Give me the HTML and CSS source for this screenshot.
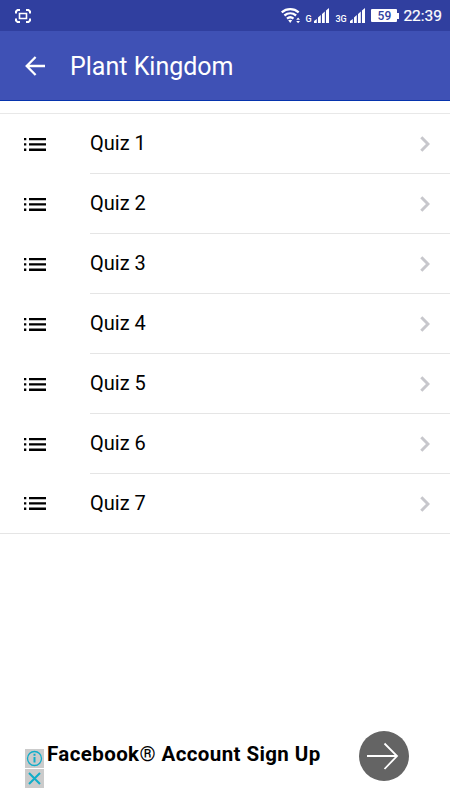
FILE: index.html
```
<!DOCTYPE html>
<html lang="en">
<head>
    <meta charset="utf-8">
    <title>Plant Kingdom</title>
    <link rel="stylesheet" href="styles.css">
</head>
<body>
    <svg class="sprite" aria-hidden="true">
        <symbol id="icon-list" viewBox="0 0 22 13">
            <path d="M0 0h2.3v2.3H0zM5 0h17v2.3H5zM0 5.3h2.3v2.3H0zM5 5.3h17v2.3H5zM0 10.6h2.3v2.3H0zM5 10.6h17v2.3H5z"/>
        </symbol>
        <symbol id="icon-chevron" viewBox="0 0 10 16">
            <path d="M1.3 1.3L8 8l-6.7 6.7" fill="none" stroke="#c7c7cc" stroke-width="3"/>
        </symbol>
        <symbol id="icon-signal" viewBox="0 0 15 15">
            <path d="M0 15v-2l2.800-2v4zM4 15V9.500l2.800-2.500v8zM8 15V6l2.800-2.500V15zM12 15V2.500L15 0v15z" fill="#fff"/>
        </symbol>
    </svg>
    <div class="status-bar">
        <svg class="capture" width="16" height="14" viewBox="0 0 16 14" fill="none" stroke="#fff" stroke-width="2">
            <path d="M1 4.5V2.5L2.5 1H5M11 1h2.5L15 2.5v2M15 9.5v2L13.5 13H11M5 13H2.5L1 11.5v-2"/>
            <path d="M4.5 4.5h7v5h-7z" stroke-width="1.6"/>
        </svg>
        <svg class="wifi" width="20" height="16" viewBox="0 0 20 16">
            <g fill="none" stroke="#fff" stroke-width="2.3">
                <path d="M.7 4.3c5-4.2 12.1-4.2 17 0M3.4 7.5c3.5-2.9 8.2-2.9 11.7 0M6 10.6c2-1.6 4.5-1.6 6.5 0"/>
            </g>
            <path d="M7.2 12.3q2-1.3 4 0l-2 2.7zM15.2 11.7l1.9-2.2 1.9 2.200zM15.2 13h3.800l-1.900 2.200z" fill="#fff"/>
        </svg>
        <span class="network">G</span>
        <svg class="signal" width="15" height="15"><use href="#icon-signal"/></svg>
        <span class="network network-3g">3G</span>
        <svg class="signal" width="15" height="15"><use href="#icon-signal"/></svg>
        <span class="battery">59</span>
        <span class="clock">22:39</span>
    </div>
    <div class="toolbar">
        <svg class="back" width="20" height="20" viewBox="0 0 20 20" fill="none" stroke="#fff" stroke-width="2.3">
            <path d="M20 10H2M10.6 1L1.7 10l8.9 9"/>
        </svg>
        <h1>Plant Kingdom</h1>
    </div>
    <ul class="quiz-list">
        <li><svg class="list-icon"><use href="#icon-list"/></svg><div class="inner"><span>Quiz 1</span><svg class="chevron"><use href="#icon-chevron"/></svg></div></li>
        <li><svg class="list-icon"><use href="#icon-list"/></svg><div class="inner"><span>Quiz 2</span><svg class="chevron"><use href="#icon-chevron"/></svg></div></li>
        <li><svg class="list-icon"><use href="#icon-list"/></svg><div class="inner"><span>Quiz 3</span><svg class="chevron"><use href="#icon-chevron"/></svg></div></li>
        <li><svg class="list-icon"><use href="#icon-list"/></svg><div class="inner"><span>Quiz 4</span><svg class="chevron"><use href="#icon-chevron"/></svg></div></li>
        <li><svg class="list-icon"><use href="#icon-list"/></svg><div class="inner"><span>Quiz 5</span><svg class="chevron"><use href="#icon-chevron"/></svg></div></li>
        <li><svg class="list-icon"><use href="#icon-list"/></svg><div class="inner"><span>Quiz 6</span><svg class="chevron"><use href="#icon-chevron"/></svg></div></li>
        <li><svg class="list-icon"><use href="#icon-list"/></svg><div class="inner"><span>Quiz 7</span><svg class="chevron"><use href="#icon-chevron"/></svg></div></li>
    </ul>
    <div class="ad">
        <div class="ad-choices">
            <svg width="19" height="19" viewBox="0 0 19 19" fill="none" stroke="#10adc9">
                <circle cx="9.5" cy="9.5" r="7" stroke-width="1.3"/>
                <path d="M9.5 8v5.5M9.5 4.8v2" stroke-width="2"/>
            </svg>
            <svg width="19" height="19" viewBox="0 0 19 19" fill="none" stroke="#10adc9" stroke-width="2">
                <path d="M4 4l11 11M15 4L4 15"/>
            </svg>
        </div>
        <div class="ad-title">Facebook<span class="mark">®</span> Account Sign Up</div>
        <svg class="ad-go" width="50" height="50" viewBox="0 0 50 50" fill="none" stroke="#fff" stroke-width="1.8">
            <circle cx="25" cy="25" r="25" fill="#646464" stroke="none"/>
            <path d="M8 25h30M25.5 12.5L38 25 25.5 38"/>
        </svg>
    </div>
</body>
</html>
```
FILE: styles.css
```
body {
    display: flex;
    flex-direction: column;
    height: 100vh;
    margin: 0;
    background: #fff;
    color: #000;
    font-family: Roboto, sans-serif;
    overflow: hidden;
}

svg {
    display: block;
    flex: none;
}

.sprite {
    display: none;
}

/* status bar */
.status-bar {
    display: flex;
    align-items: center;
    box-sizing: border-box;
    height: 31px;
    padding: 0 8px 0 15px;
    background: #303f9f;
    color: #fff;
}

.wifi {
    margin-left: auto;
}

.network {
    width: 7px;
    margin: 7px 2px 0 4px;
    font-size: 9px;
    font-weight: 500;
    line-height: 8px;
}

.network-3g {
    width: 13px;
    margin-left: 6px;
}

.battery {
    position: relative;
    width: 26px;
    height: 13px;
    margin: 0 6px;
    border-radius: 1px;
    background: #fff;
    color: #303f9f;
    font-size: 12px;
    font-weight: 500;
    line-height: 14px;
    text-align: center;
}

.battery::after {
    content: "";
    position: absolute;
    top: 4px;
    right: -2px;
    width: 2px;
    height: 6px;
    background: #fff;
}

.clock {
    padding-top: 1px;
    font-size: 15.5px;
    line-height: 30px;
    -webkit-text-stroke: 0.2px #fff;
}

/* toolbar */
.toolbar {
    display: flex;
    align-items: center;
    box-sizing: border-box;
    height: 70px;
    padding-left: 25px;
    border-bottom: 1px solid #0734ad;
    background: #3f51b5;
    color: #fff;
}

.toolbar h1 {
    margin: 0 0 0 25px;
    padding-top: 2px;
    font-size: 25px;
    font-weight: 400;
    line-height: 30px;
}

/* quizzes */
.quiz-list {
    margin: 12px 0 0;
    padding: 0;
    border-top: 1px solid #e8e8e8;
    border-bottom: 1px solid #e5e5e5;
    list-style: none;
}

.quiz-list li {
    display: flex;
    align-items: center;
    padding-left: 24px;
}

.list-icon {
    width: 22px;
    height: 13px;
}

.inner {
    display: flex;
    flex: 1;
    align-items: center;
    justify-content: space-between;
    box-sizing: border-box;
    height: 60px;
    margin-left: 44px;
    padding-right: 20px;
    border-bottom: 1px solid #e5e5e5;
    font-size: 20px;
}

.inner span {
    padding-bottom: 1px;
}

.quiz-list li:last-child .inner {
    height: 59px;
    border-bottom: 0;
}

.chevron {
    width: 10px;
    height: 16px;
}

/* ad banner */
.ad {
    display: flex;
    align-items: flex-start;
    height: 69px;
    margin-top: auto;
    padding: 0 41px 0 25px;
}

.ad-choices {
    display: grid;
    gap: 1px;
    margin-top: 18px;
}

.ad-choices svg {
    background: #cbcbcb;
}

.ad-title {
    margin: 11px auto 0 3px;
    font-size: 20.5px;
    font-weight: 700;
    line-height: 24px;
    letter-spacing: 0.4px;
    white-space: nowrap;
}

.ad-title .mark {
    font-weight: 400;
}
```
